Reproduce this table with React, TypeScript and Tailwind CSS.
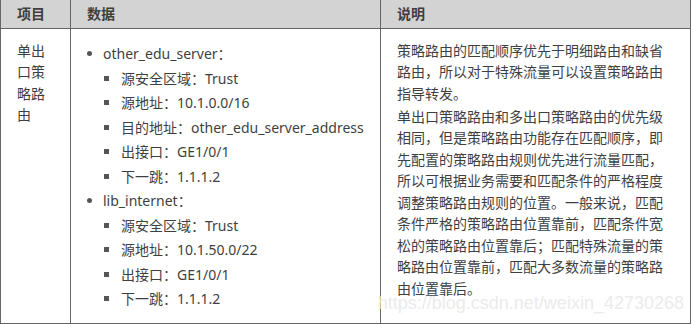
const font = "font-['Noto_Sans','Noto_Sans_CJK_SC',sans-serif]";

type Entry = { name: string; rules: string[] };

const entries: Entry[] = [
  {
    name: "other_edu_server：",
    rules: [
      "源安全区域：Trust",
      "源地址：10.1.0.0/16",
      "目的地址：other_edu_server_address",
      "出接口：GE1/0/1",
      "下一跳：1.1.1.2",
    ],
  },
  {
    name: "lib_internet：",
    rules: ["源安全区域：Trust", "源地址：10.1.50.0/22", "出接口：GE1/0/1", "下一跳：1.1.1.2"],
  },
];

function Disc() {
  return <span className="mr-[11px] ml-[16px] h-[5px] w-[5px] shrink-0 rounded-full bg-[#555]" />;
}

function Square() {
  return <span className="mr-[12px] ml-[33px] h-[5px] w-[5px] shrink-0 bg-[#555]" />;
}

export default function App() {
  return (
    <div className={`relative h-[324px] w-[692px] overflow-hidden bg-white ${font}`}>
      <table className="w-[690px] table-fixed border-collapse text-[14px] text-[#3f3f3f]">
        <colgroup>
          <col className="w-[70px]" />
          <col className="w-[310px]" />
          <col className="w-[310px]" />
        </colgroup>
        <thead>
          <tr className="h-[28px] bg-[#d3d3d3] text-left">
            <th className="border-x border-b border-[#666] px-[16px] font-bold leading-[26px]">项目</th>
            <th className="border-x border-b border-[#666] px-[16px] font-bold leading-[26px]">数据</th>
            <th className="border-x border-b border-[#666] px-[16px] font-bold leading-[26px]">说明</th>
          </tr>
        </thead>
        <tbody>
          <tr className="h-[295px] align-top">
            <td className="border-x border-b border-[#666] px-[16px] pt-[11px] leading-[21.5px]">
              单出口策略路由
            </td>
            <td className="border-x border-b border-[#666] pt-[13px]">
              <ul>
                {entries.map((e) => (
                  <li key={e.name}>
                    <div className="flex h-[24.5px] items-center">
                      <Disc />
                      <span>{e.name}</span>
                    </div>
                    <ul>
                      {e.rules.map((r) => (
                        <li key={r} className="flex h-[24.5px] items-center whitespace-nowrap">
                          <Square />
                          <span>{r}</span>
                        </li>
                      ))}
                    </ul>
                  </li>
                ))}
              </ul>
            </td>
            <td className="border-x border-b border-[#666] px-[16px] pt-[11px] leading-[21.5px]">
              <p className="mb-[1.5px]">
                策略路由的匹配顺序优先于明细路由和缺省路由，所以对于特殊流量可以设置策略路由指导转发。
              </p>
              <p>
                单出口策略路由和多出口策略路由的优先级相同，但是策略路由功能存在匹配顺序，即先配置的策略路由规则优先进行流量匹配，所以可根据业务需要和匹配条件的严格程度调整策略路由规则的位置。一般来说，匹配条件严格的策略路由位置靠前，匹配条件宽松的策略路由位置靠后；匹配特殊流量的策略路由位置靠前，匹配大多数流量的策略路由位置靠后。
              </p>
            </td>
          </tr>
        </tbody>
      </table>
      <span className="absolute right-[8px] top-[292px] font-['Liberation_Sans',sans-serif] text-[18px] leading-[22px] text-[#ebebeb]">
        https://blog.csdn.net/weixin_42730268
      </span>
    </div>
  );
}
